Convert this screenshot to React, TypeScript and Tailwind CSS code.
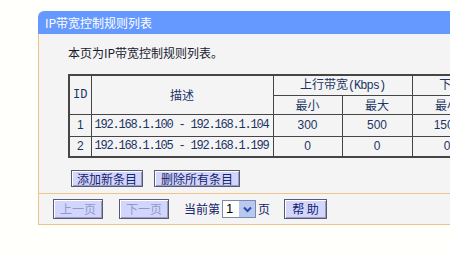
import React from "react";

const CJK = "font-[family-name:'Noto_Sans_CJK_SC','Liberation_Sans',sans-serif]";
const MONO = "font-mono";
const ARIAL = "font-[family-name:'Liberation_Sans',Arial,sans-serif]";

function Btn({ children, disabled, className = "" }: { children: React.ReactNode; disabled?: boolean; className?: string }) {
  return (
    <div
      className={
        "flex items-center justify-center border border-[#5a5a6e] bg-[#d2d6fc] text-[12px] leading-none shadow-[inset_1px_1px_0_#ffffff,inset_-1px_-1px_0_#9a9ac8] " +
        CJK +
        " " +
        (disabled ? "text-[#8e9acc] " : "text-[#14236a] ") +
        className
      }
    >
      {children}
    </div>
  );
}

export default function App() {
  const base = "border border-[#454545] text-[#1b3466] leading-none whitespace-nowrap overflow-hidden";
  const cell = base + " text-[12px]";
  const ip = base + " text-[12px] pl-[3px] tracking-[-1.2px] " + MONO;
  return (
    <div className={"w-[450px] h-[254px] bg-[#fffffb] overflow-hidden pt-[11px] pl-[38px] " + CJK}>
      <div className="w-[640px]">
        <div className="h-[23px] bg-[#6699ff] rounded-tl-[6px] pl-[7px] flex items-center text-white text-[12px]">
          IP带宽控制规则列表
        </div>
        <div className="border-l border-[#eec48a] bg-[#f4f4f4]">
          <div className="pl-[29px] pt-[11px]">
            <div className="text-[12px] leading-[16px] text-[#1a1a2e]">本页为IP带宽控制规则列表。</div>
            <div className="mt-[13px]">
              <table className="table-fixed w-[483px] border-collapse border-2 border-[#454545] bg-[#f4f4f4]">
                <colgroup>
                  <col className="w-[22px]" />
                  <col className="w-[182px]" />
                  <col className="w-[69px]" />
                  <col className="w-[70px]" />
                  <col className="w-[70px]" />
                  <col className="w-[70px]" />
                </colgroup>
                <tbody>
                  <tr className="h-[20px]">
                    <td rowSpan={2} className={cell + " text-center " + MONO}>ID</td>
                    <td rowSpan={2} className={cell + " text-center"}>描述</td>
                    <td colSpan={2} className={cell + " text-center"}>
                      上行带宽<span className={MONO + " tracking-[-1px]"}>(Kbps)</span>
                    </td>
                    <td colSpan={2} className={cell + " text-center"}>
                      下行带宽<span className={MONO + " tracking-[-1px]"}>(Kbps)</span>
                    </td>
                  </tr>
                  <tr className="h-[19px]">
                    <td className={cell + " text-center"}>最小</td>
                    <td className={cell + " text-center"}>最大</td>
                    <td className={cell + " text-center"}>最小</td>
                    <td className={cell + " text-center"}>最大</td>
                  </tr>
                  <tr className="h-[22px]">
                    <td className={cell + " text-center " + ARIAL}>1</td>
                    <td className={ip}>192.168.1.100 - 192.168.1.104</td>
                    <td className={cell + " text-center " + ARIAL}>300</td>
                    <td className={cell + " text-center " + ARIAL}>500</td>
                    <td className={cell + " text-center " + ARIAL}>1500</td>
                    <td className={cell + " text-center " + ARIAL}>2000</td>
                  </tr>
                  <tr className="h-[21px]">
                    <td className={cell + " text-center " + ARIAL}>2</td>
                    <td className={ip}>192.168.1.105 - 192.168.1.199</td>
                    <td className={cell + " text-center " + ARIAL}>0</td>
                    <td className={cell + " text-center " + ARIAL}>0</td>
                    <td className={cell + " text-center " + ARIAL}>0</td>
                    <td className={cell + " text-center " + ARIAL}>0</td>
                  </tr>
                </tbody>
              </table>
            </div>
            <div className="mt-[12px] flex gap-[11px] pl-[3px] pb-[6px]">
              <Btn className="w-[72px] h-[17px]">添加新条目</Btn>
              <Btn className="w-[86px] h-[17px]">删除所有条目</Btn>
            </div>
          </div>
          <div className="border-t border-b border-[#eec48a] h-[32px] flex items-center pl-[14px]">
            <Btn disabled className="w-[50px] h-[20px]">上一页</Btn>
            <Btn disabled className="w-[50px] h-[20px] ml-[16px]">下一页</Btn>
            <span className="ml-[15px] text-[12px] text-[#14236a]">当前第</span>
            <div className="ml-[2px] w-[34px] h-[18px] bg-white border border-[#7a8aa8] flex items-center">
              <span className={"pl-[3px] text-[13px] text-black flex-1 " + ARIAL}>1</span>
              <div className="w-[16px] h-[16px] bg-[#b8c8f0] flex items-center justify-center">
                <svg width="9" height="7" viewBox="0 0 9 7">
                  <path d="M1 1.5 L4.5 5 L8 1.5" stroke="#2a4aa8" strokeWidth="2" fill="none" />
                </svg>
              </div>
            </div>
            <span className="ml-[2px] text-[12px] text-[#14236a]">页</span>
            <Btn className="w-[43px] h-[20px] ml-[14px]">帮 助</Btn>
          </div>
        </div>
      </div>
    </div>
  );
}
